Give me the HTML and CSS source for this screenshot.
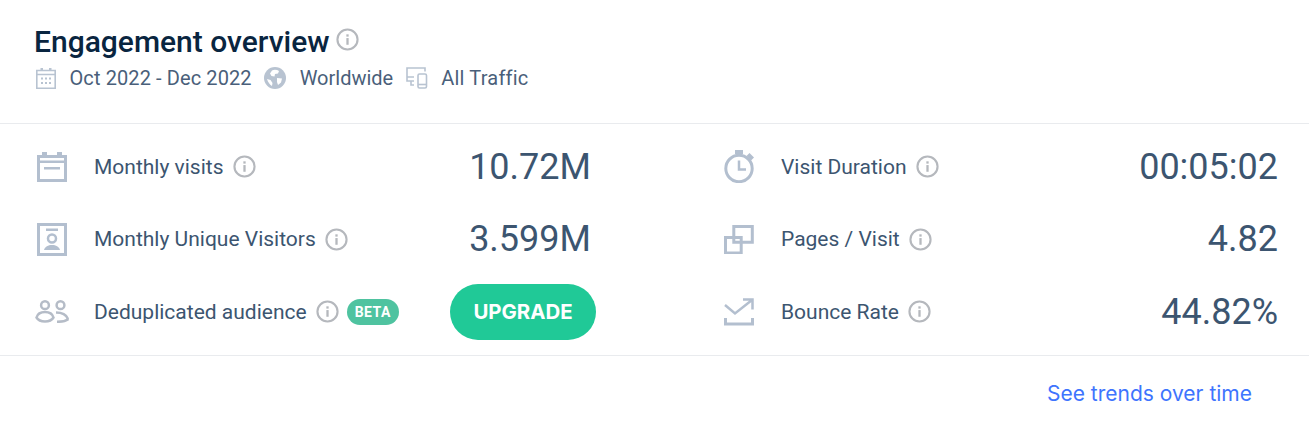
FILE: index.html
```html
<!DOCTYPE html>
<html lang="en">
<head>
    <meta charset="UTF-8">
    <title>Engagement overview</title>
    <link rel="stylesheet" href="styles.css">
</head>
<body>
    <svg class="defs" width="0" height="0">
        <symbol id="info" viewBox="0 0 24 24">
            <circle cx="12" cy="12" r="10.500" fill="none" stroke="#b5b8bd" stroke-width="2.200"/>
            <rect x="10.800" y="10.500" width="2.400" height="7" fill="#b5b8bd"/>
            <rect x="10.800" y="6.600" width="2.400" height="2.400" fill="#b5b8bd"/>
        </symbol>
    </svg>

    <header class="header">
        <div class="title-row">
            <h1>Engagement overview</h1>
            <svg class="info title-info"><use href="#info"/></svg>
        </div>
        <div class="filters">
            <span class="filter filter-date">
                <svg class="filter-icon" viewBox="0 0 20 22" width="20" height="22">
                    <path d="M.8 3.500h18.400v17.700H.8z M1 7.500h18" fill="none" stroke="#b8c3d1" stroke-width="1.600"/>
                    <path d="M4.500 1h2.500v3H4.500z M13 1h2.500v3H13z" fill="#b8c3d1"/>
                    <path d="M5 10.500h2v2H5z M9 10.500h2v2H9z M13 10.500h2v2h-2z M5 15h2v2H5z M9 15h2v2H9z M13 15h2v2h-2z" fill="#b8c3d1"/>
                </svg>
                Oct 2022 - Dec 2022
            </span>
            <span class="filter">
                <svg class="filter-icon" viewBox="0 0 22 22" width="22" height="22">
                    <circle cx="11" cy="11" r="11" fill="#b8c3d1"/>
                    <path d="M8 3.500c2-1 5-.8 7 .5l-1 2.500-3 .5-.5 2.500-3-.5-1.500-2.500zM13 11l5 .5-1 4-3 2.500-1-3zM3 12l3.500 1 2 3-.5 3c-2.500-1.500-4-4-5-7z" fill="#fff"/>
                </svg>
                Worldwide
            </span>
            <span class="filter filter-traffic">
                <svg class="filter-icon" viewBox="0 0 22 22" width="22" height="22">
                    <path d="M19 4.500V1H1v13h7 M1 10h7 M5 14v4h3" fill="none" stroke="#b8c3d1" stroke-width="1.600"/>
                    <rect x="12" y="7" width="8.500" height="14" rx="1.500" fill="none" stroke="#b8c3d1" stroke-width="1.600"/>
                    <path d="M12 17.500h8" stroke="#b8c3d1" stroke-width="1.600"/>
                </svg>
                All Traffic
            </span>
        </div>
    </header>

    <section class="metrics">
        <div class="column">
            <div class="metric">
                <svg class="metric-icon" viewBox="0 0 30 30">
                    <path d="M1.500 4.500h27v24h-27z" fill="none" stroke="#b3bfcf" stroke-width="3"/>
                    <path d="M5 0h5v4H5z M20 0h5v4h-5z M0 8.500h30V11H0z M7 15h16v2.500H7z" fill="#b3bfcf"/>
                </svg>
                <span class="label">Monthly visits</span>
                <svg class="info"><use href="#info"/></svg>
                <span class="value">10.72M</span>
            </div>
            <div class="metric">
                <svg class="metric-icon" viewBox="0 0 30 33">
                    <path d="M1.500 1.500h27v30h-27z" fill="none" stroke="#b3bfcf" stroke-width="3"/>
                    <path d="M9 5.500h12V8H9z" fill="#b3bfcf"/>
                    <circle cx="15" cy="15.500" r="4" fill="none" stroke="#b3bfcf" stroke-width="2.500"/>
                    <path d="M7 27c1-3.500 4-5 8-5s7 1.500 8 5z" fill="#b3bfcf"/>
                </svg>
                <span class="label">Monthly Unique Visitors</span>
                <svg class="info"><use href="#info"/></svg>
                <span class="value">3.599M</span>
            </div>
            <div class="metric">
                <svg class="metric-icon icon-wide" viewBox="0 0 34 23">
                    <g fill="none" stroke="#b5bcc7" stroke-width="2.500">
                        <circle cx="10" cy="5.200" r="3.900"/>
                        <circle cx="25.500" cy="5.200" r="3.900"/>
                        <path d="M1.500 17.500c1-3.500 4.500-5.500 8.500-5.500s7.500 2 8.500 5.500c-1.500 2.500-4.500 4-8.500 4s-7-1.500-8.500-4z"/>
                        <path d="M21 12.500c6 0 10.500 2.500 12 6.500M22 21.800c5 0 9-.8 11.500-2.800"/>
                    </g>
                </svg>
                <span class="label">Deduplicated audience</span>
                <svg class="info"><use href="#info"/></svg>
                <span class="badge">BETA</span>
                <button class="upgrade">UPGRADE</button>
            </div>
        </div>
        <div class="column">
            <div class="metric">
                <svg class="metric-icon" viewBox="0 0 30 33">
                    <circle cx="15" cy="18.500" r="13.200" fill="none" stroke="#b3bfcf" stroke-width="3"/>
                    <path d="M11 0h8v4h-8z" fill="#b3bfcf"/>
                    <path d="M25.500 3l4.500 4.500-3 3L22.500 6z" fill="#b3bfcf"/>
                    <path d="M15 10.500v9h7" fill="none" stroke="#b3bfcf" stroke-width="2.500"/>
                </svg>
                <span class="label">Visit Duration</span>
                <svg class="info"><use href="#info"/></svg>
                <span class="value">00:05:02</span>
            </div>
            <div class="metric">
                <svg class="metric-icon" viewBox="0 0 30 29.500">
                    <path d="M9.800 1.500h18.500v15.700H9.800z M1.500 12.500h15.700V28H1.500z" fill="none" stroke="#b3bfcf" stroke-width="3"/>
                </svg>
                <span class="label">Pages / Visit</span>
                <svg class="info"><use href="#info"/></svg>
                <span class="value">4.82</span>
            </div>
            <div class="metric">
                <svg class="metric-icon" viewBox="0 0 30 28">
                    <path d="M1.500 20v6h27v-6" fill="none" stroke="#b3bfcf" stroke-width="3"/>
                    <path d="M1 7l10 8.500L28 2 M19 1.500h9.500v10" fill="none" stroke="#b3bfcf" stroke-width="2.500"/>
                </svg>
                <span class="label">Bounce Rate</span>
                <svg class="info"><use href="#info"/></svg>
                <span class="value">44.82%</span>
            </div>
        </div>
    </section>

    <footer class="footer">
        <a href="#" class="trends">See trends over time</a>
    </footer>
</body>
</html>
```

FILE: styles.css
```css
body {
    margin: 0;
    background-color: #ffffff;
    font-family: Roboto, "Liberation Sans", sans-serif;
    color: #3c5570;
}

.defs {
    display: block;
    height: 0;
}

.header {
    height: 99px;
    padding: 24px 35px 0;
    border-bottom: 1px solid #e9ebee;
}

.title-row {
    display: flex;
    align-items: center;
    gap: 6px;
    height: 35px;
    margin-left: -1px;
}

h1 {
    margin: 0;
    font-size: 30px;
    font-weight: 500;
    line-height: 35px;
    color: #092540;
}

.info {
    width: 23px;
    height: 23px;
    flex: none;
    margin-left: 9px;
}

.title-info {
    margin: -4px 0 0;
}

.filters {
    display: flex;
    align-items: center;
    gap: 12.5px;
    margin-top: 4px;
    height: 30px;
    font-size: 20px;
    color: #4a5f7a;
}

.filter {
    display: flex;
    align-items: center;
    gap: 13.5px;
}

.filter-date {
    margin-left: 1px;
    letter-spacing: 0.1px;
}

.filter-traffic {
    letter-spacing: 0.2px;
}

.metrics {
    display: grid;
    grid-template-columns: 556px 556px;
    column-gap: 131px;
    padding: 6.5px 31px 0 35px;
    height: 224.5px;
    border-bottom: 1px solid #e9ebee;
}

.column {
    display: flex;
    flex-direction: column;
}

.metric {
    display: flex;
    align-items: center;
    height: 72.5px;
}

.metric-icon {
    width: 30px;
    flex: none;
    margin: 0 27px 0 2px;
}

.icon-wide {
    width: 34px;
    margin: 0 25px 0 0;
}

.label {
    font-size: 21px;
    color: #3c5570;
}

.value {
    margin-left: auto;
    font-size: 36px;
    color: #3c5570;
}

.badge {
    margin-left: 8px;
    padding: 0 8px;
    height: 26px;
    line-height: 26px;
    border-radius: 13px;
    background-color: #4fc3a0;
    color: #ffffff;
    font-size: 14px;
    font-weight: 700;
    letter-spacing: 0.5px;
}

.upgrade {
    margin-left: auto;
    margin-right: -5px;
    width: 146px;
    height: 56px;
    border: 0;
    border-radius: 28px;
    background-color: #20c997;
    color: #ffffff;
    font-family: Inter, Roboto, sans-serif;
    font-size: 20.4px;
    font-weight: 700;
}

.footer {
    display: flex;
    justify-content: flex-end;
    padding: 25px 57px 0 0;
}

.trends {
    font-family: Inter, Roboto, sans-serif;
    font-size: 21px;
    line-height: 26px;
    color: #3e74fe;
    text-decoration: none;
}
```
